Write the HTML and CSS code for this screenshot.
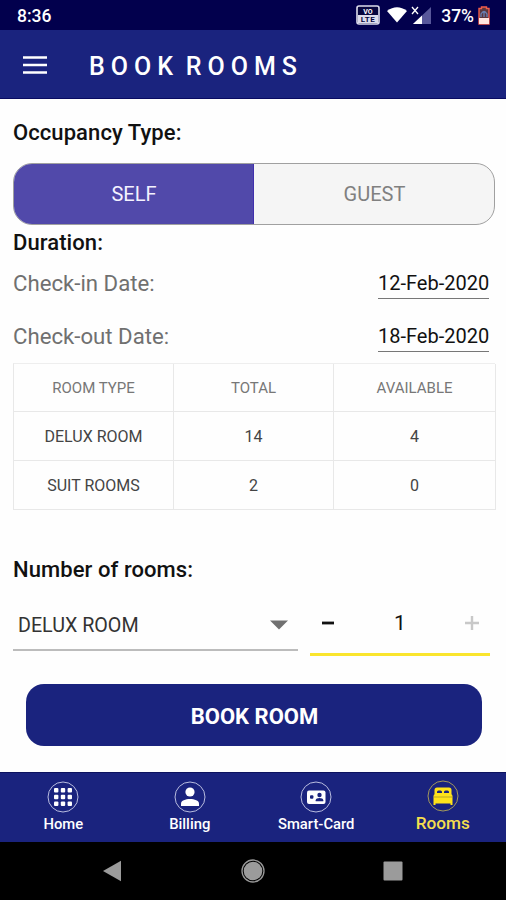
FILE: index.html
```html
<!DOCTYPE html>
<html lang="en">
<head>
<meta charset="utf-8">
<title>Book Rooms</title>
<link rel="stylesheet" href="styles.css">
</head>
<body>
<div class="status">
  <span class="clock">8:36</span>
  <div class="indicators">
    <svg class="volte" width="24" height="20" viewBox="0 0 24 20"><rect x="1" y="1" width="22" height="18" rx="2" fill="#07063f" stroke="#dcdcec" stroke-width="1.6"/><rect x="2" y="10" width="20" height="8" fill="#dcdcec"/><text x="12" y="8.8" class="vo">VO</text><text x="12" y="17" class="lte">LTE</text></svg>
    <svg class="wifi" width="20" height="16" viewBox="0 0 20 16"><path d="M10 15.5 0 4Q10-3.5 20 4Z" fill="#fff"/></svg>
    <svg class="signal" width="21" height="19" viewBox="0 0 21 19"><path d="M2 18 20 1V18Z" fill="#58579a"/><path d="M2 18 11 9.5V18Z" fill="#fff"/><path d="M1 1l6 7M7 1 1 8" stroke="#fff" stroke-width="1.3"/></svg>
    <span class="percent">37%</span>
    <svg class="battery" width="12" height="19" viewBox="0 0 12 19"><path d="M3.5 1h5v1.5H11V18H1V2.500h2.500Z" fill="#59373f" stroke="#f25d4b" stroke-width="1.4"/><path d="M1 12h10v6H1Z" fill="#ffe4df"/><path d="M3 11V8q3-5 6 0v3M6 6v5" fill="none" stroke="#6880b5" stroke-width="1.300"/></svg>
  </div>
</div>
<header class="appbar">
  <svg class="menu" width="26" height="20" viewBox="0 0 26 20"><path d="M1 2.500h24M1 10h24M1 17.500h24" stroke="#fff" stroke-width="2.700"/></svg>
  <h1 class="title">BOOK ROOMS</h1>
</header>
<main class="content">
  <h2 class="label occupancy">Occupancy Type:</h2>
  <div class="toggle"><div class="option selected"><span>SELF</span></div><div class="option"><span>GUEST</span></div></div>
  <h2 class="label duration">Duration:</h2>
  <div class="date-row"><span class="date-label">Check-in Date:</span><span class="date">12-Feb-2020</span></div>
  <div class="date-row second"><span class="date-label">Check-out Date:</span><span class="date">18-Feb-2020</span></div>
  <div class="table">
    <div class="cell head">ROOM TYPE</div><div class="cell head">TOTAL</div><div class="cell head">AVAILABLE</div>
    <div class="cell">DELUX ROOM</div><div class="cell">14</div><div class="cell">4</div>
    <div class="cell">SUIT ROOMS</div><div class="cell">2</div><div class="cell">0</div>
  </div>
  <h2 class="label number">Number of rooms:</h2>
  <div class="pickers">
    <div class="select"><span>DELUX ROOM</span><svg width="18" height="10" viewBox="0 0 18 10"><path d="M0 .5h18L9 9.500Z" fill="#707070"/></svg></div>
    <div class="stepper">
      <svg width="14" height="14" viewBox="0 0 14 14"><path d="M1 7h12" stroke="#111" stroke-width="2.800"/></svg>
      <span>1</span>
      <svg width="14" height="14" viewBox="0 0 14 14"><path d="M0 7h14M7 0v14" stroke="#c8c8c8" stroke-width="2.400"/></svg>
    </div>
  </div>
  <div class="book"><span>BOOK ROOM</span></div>
</main>
<nav class="tabs">
  <div class="tab"><svg width="32" height="32" viewBox="0 0 32 32"><circle cx="16" cy="16" r="15" class="ring"/><g fill="#fff"><rect x="7" y="7" width="4.400" height="4.400" rx="1"/><rect x="13.800" y="7" width="4.400" height="4.400" rx="1"/><rect x="20.600" y="7" width="4.400" height="4.400" rx="1"/><rect x="7" y="13.800" width="4.400" height="4.400" rx="1"/><rect x="13.800" y="13.800" width="4.400" height="4.400" rx="1"/><rect x="20.600" y="13.800" width="4.400" height="4.400" rx="1"/><rect x="7" y="20.600" width="4.400" height="4.400" rx="1"/><rect x="13.800" y="20.600" width="4.400" height="4.400" rx="1"/><rect x="20.600" y="20.600" width="4.400" height="4.400" rx="1"/></g></svg><span>Home</span></div>
  <div class="tab"><svg width="32" height="32" viewBox="0 0 32 32"><circle cx="16" cy="16" r="15" class="ring"/><circle cx="16" cy="11" r="4.600" fill="#fff"/><path d="M7 25v-2.500c0-6 18-6 18 0V25Z" fill="#fff"/></svg><span>Billing</span></div>
  <div class="tab"><svg width="32" height="32" viewBox="0 0 32 32"><circle cx="16" cy="16" r="15" class="ring"/><rect x="7" y="9.500" width="18.500" height="13.500" rx="2" fill="#fff"/><g fill="#1a237e"><rect x="10" y="14.300" width="3.400" height="3.400" rx="1"/><circle cx="19.500" cy="14" r="2.200"/><path d="M15.700 20.200v-1c0-3 7.600-3 7.600 0v1Z"/></g></svg><span>Smart-Card</span></div>
  <div class="tab active"><svg width="32" height="32" viewBox="0 0 32 32"><circle cx="16" cy="16" r="15" class="ring"/><g fill="#ffe31a"><path d="M7.500 14.500V10q0-2.500 2.500-2.500h12q2.500 0 2.500 2.500v4.500Z"/><path d="M6.500 25v-9q0-2 2-2h15q2 0 2 2v9h-2v-1.500h-15V25Z"/></g><path d="M7 17h18" stroke="#89802e" stroke-width=".6"/><path d="M10 13v-1q0-1.500 1.500-1.500h2q1.500 0 1.500 1.500v1ZM17 13v-1q0-1.500 1.500-1.500h2q1.500 0 1.500 1.500v1Z" fill="#1a237e"/></svg><span>Rooms</span></div>
</nav>
<footer class="system">
  <svg width="20" height="22" viewBox="0 0 20 22"><path d="M1 11 19 .8v20.400Z" fill="#9b9b9b"/></svg>
  <svg width="24" height="24" viewBox="0 0 24 24"><circle cx="12" cy="12" r="11" fill="none" stroke="#999" stroke-width="1.300"/><circle cx="12" cy="12" r="9.300" fill="#9b9b9b"/></svg>
  <svg width="20" height="20" viewBox="0 0 20 20"><rect x=".5" y=".5" width="19" height="19" rx="1" fill="#9b9b9b"/></svg>
</footer>
</body>
</html>
```
FILE: styles.css
```css
* { box-sizing: border-box; }
body { margin: 0; width: 506px; height: 900px; overflow: hidden; display: flex; flex-direction: column; background: #fefefe; font-family: Roboto, sans-serif; color: #111; }
svg { display: block; flex: none; }
span { white-space: nowrap; }
h1, h2 { margin: 0; font-weight: 500; white-space: nowrap; }
.status { height: 30px; background: #02004d; color: #fff; display: flex; justify-content: space-between; padding: 0 16px 0 17px; align-items: center; }
.clock { font-size: 17.500px; font-weight: 500; line-height: 30px; padding-top: 2px; }
.indicators { display: flex; align-items: center; }
.volte { margin-right: 1px; }
.vo, .lte { font: 700 7px Roboto, sans-serif; text-anchor: middle; fill: #fff; }
.lte { font-size: 8px; fill: #07063f; letter-spacing: .5px; }
.wifi { margin-left: 6px; }
.signal { margin-left: 4px; }
.percent { margin-left: 9px; font-size: 17.500px; font-weight: 500; line-height: 30px; padding-top: 2px; }
.battery { margin-left: 4px; }
.appbar { height: 69px; background: #1a237e; border-bottom: 1px solid #090b61; color: #fff; display: flex; align-items: center; padding: 2px 0 0 22px; }
.title { margin-left: 41px; font-size: 25px; letter-spacing: 6px; word-spacing: -5.500px; line-height: 34px; padding-top: 3px; }
.content { height: 673px; padding: 0 11px 0 13px; display: flex; flex-direction: column; }
.label { font-size: 22px; letter-spacing: .08px; line-height: 28px; align-self: flex-start; }
.occupancy { margin-top: 20px; }
.toggle { height: 62px; margin-top: 16px; display: flex; border: 1px solid #a0a0a0; border-radius: 19px; overflow: hidden; background: #f5f5f5; flex: none; }
.option { flex: 1; display: flex; align-items: center; justify-content: center; color: #808080; font-size: 20px; padding-left: 1px; }
.selected { flex: 0 0 240px; background: #5149aa; color: #f4f2ff; border-right: 1px solid #4030ac; }
.duration { margin-top: 4px; }
.date-row { height: 42px; margin-right: 6px; display: flex; justify-content: space-between; align-items: flex-start; flex: none; }
.second { margin-top: 10px; }
.date-label { font-size: 22.200px; line-height: 28px; color: #707070; padding-top: 12px; }
.date { height: 42px; font-size: 20px; line-height: 28px; padding-top: 12px; border-bottom: 1px solid #777; width: 111px; }
.second .date-label { padding-top: 13px; }
.second .date { height: 43px; padding-top: 13px; }
.table { display: grid; grid-template-columns: 160px 160px 162px; grid-template-rows: 48px 49px 49px; margin-top: 12px; border-top: 1px solid #eee; border-left: 1px solid #e8e8e8; flex: none; }
.cell { display: flex; align-items: center; justify-content: center; border-right: 1px solid #e8e8e8; border-bottom: 1px solid #e8e8e8; font-size: 16px; color: #444; }
.head { color: #777; font-size: 15px; padding-top: 1px; }
.number { margin-top: 46px; }
.pickers { display: flex; align-items: flex-start; height: 73px; gap: 12px; flex: none; margin-top: -1px; }
.select { width: 285px; height: 68px; border-bottom: 2px solid #bcbcbc; display: flex; align-items: center; justify-content: space-between; padding: 18px 10px 0 5px; font-size: 19.700px; color: #333; }
.stepper { width: 180px; height: 73px; border-bottom: 3px solid #fae52d; display: flex; align-items: center; justify-content: space-between; padding: 9px 11px 0; font-size: 21px; }
.book { height: 62px; margin: 28px 13px 0; border-radius: 18px; background: #1a237e; color: #fff; display: flex; align-items: center; justify-content: center; font-size: 22px; font-weight: 700; padding: 2px 0 0 1px; flex: none; }
.tabs { height: 70px; background: #1a237e; color: #fff; display: grid; grid-template-columns: repeat(4, 126.500px); border-top: 1px solid #0c125f; }
.tab { display: flex; flex-direction: column; align-items: center; padding-top: 8px; font-size: 14.800px; font-weight: 500; line-height: 23px; }
.ring { fill: none; stroke: #b8bcdf; stroke-width: 1; }
.active { color: #f5de4d; padding-top: 7px; font-size: 17.200px; }
.active .ring { stroke: #a2985c; }
.system { height: 58px; background: #000; display: flex; align-items: center; justify-content: space-between; padding: 0 103px 0 102px; }
```
